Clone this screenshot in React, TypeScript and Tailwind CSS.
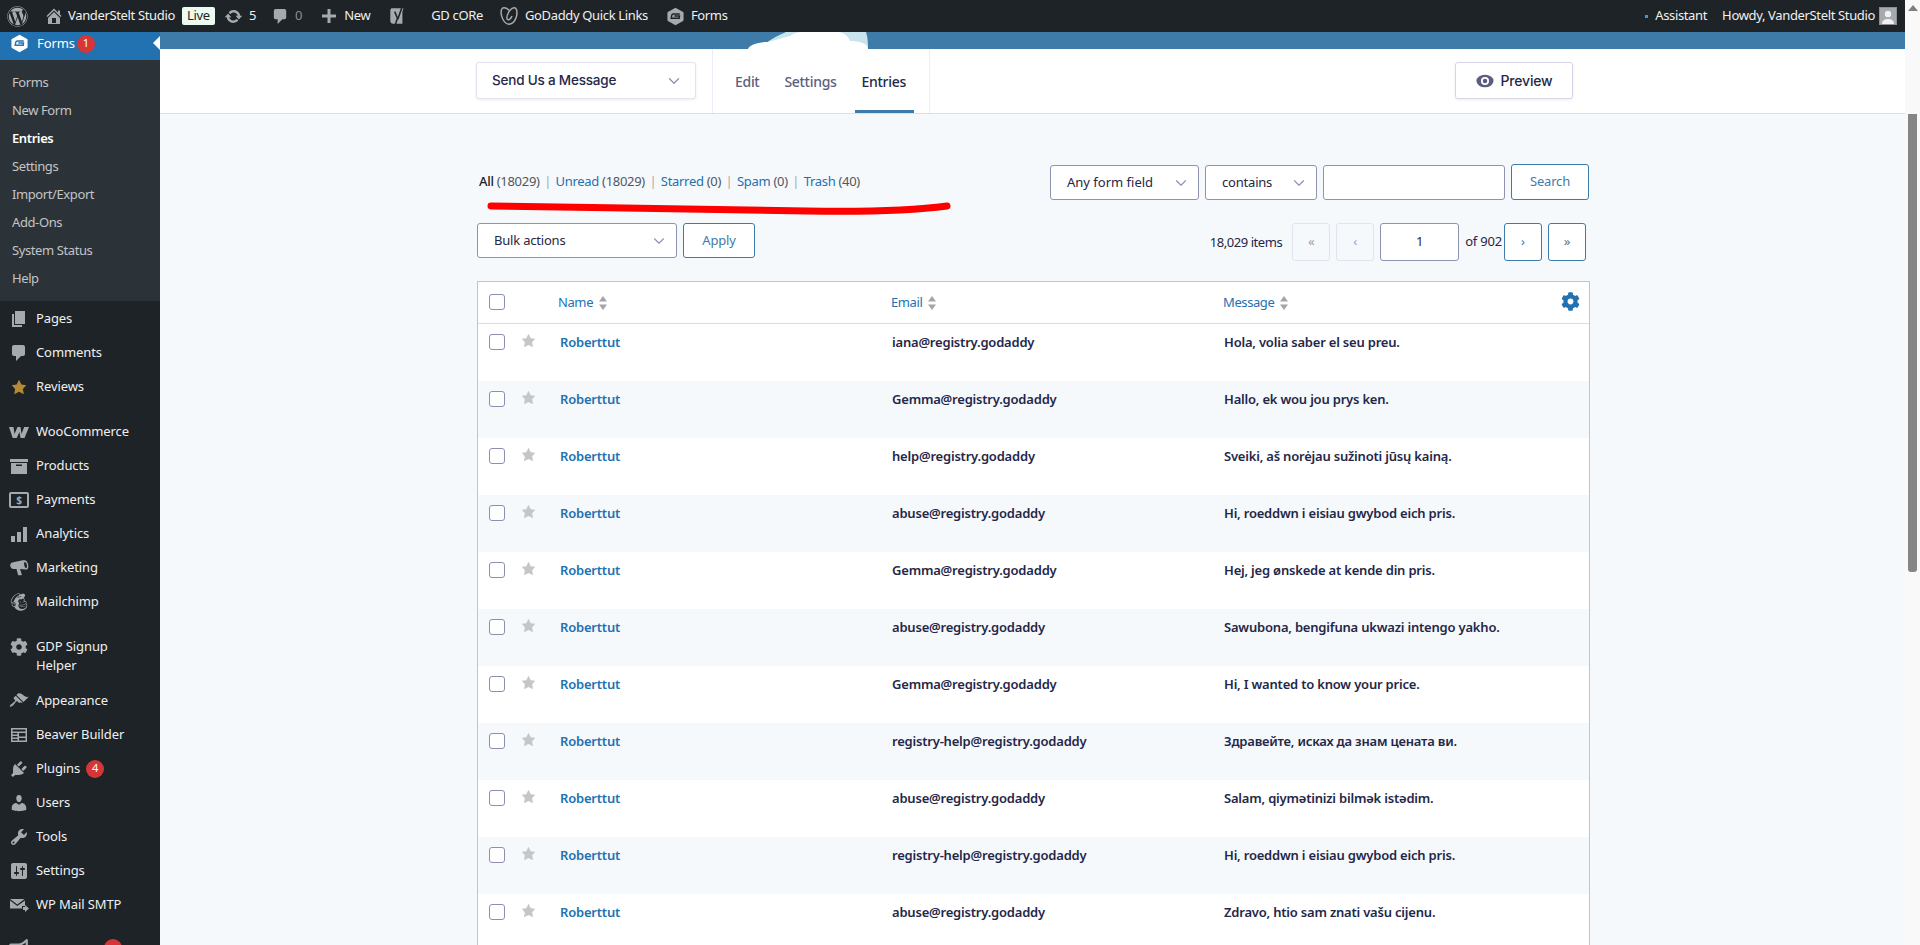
import type { ReactNode } from "react";
import { FaWordpress, FaCog, FaBullhorn, FaMailchimp } from "react-icons/fa";
import { ChevronDown } from "lucide-react";

const sans = "font-['Noto_Sans','Liberation_Sans',sans-serif]";

function Dash({ d, className = "" }: { d: string; className?: string }) {
  return (
    <svg viewBox="0 0 20 20" className={className} fill="currentColor" fillRule="evenodd">
      <path d={d} />
    </svg>
  );
}

const paths = {
  pages: "M6 15V2h10v13H6zm-1 1h8v2H3V5h2v11z",
  comment: "M5 2h9c1.1 0 2 .9 2 2v7c0 1.1-.9 2-2 2h-2l-5 5v-5H5c-1.1 0-2-.9-2-2V4c0-1.1.9-2 2-2z",
  star: "M10 1l3 6 6 .75-4.12 4.62L16 19l-6-3-6 3 1.13-6.63L1 7.75 7 7z",
  box: "M19 3v3H1V3h18zM2 7h16v11H2V7zm5 1.5V10h6V8.5H7z",
  bars: "M2 12h4v6H2zM8 8h4v10H8zM14 3h4v15h-4z",
  brush:
    "M14.48 11.06L7.41 3.99l1.5-1.5c.5-.56 2.3-.47 3.51.32 1.21.8 1.43 1.28 2.91 2.1 1.18.64 2.45 1.26 4.45.85zm-.71.71L6.7 4.7 4.93 6.47c-.39.39-.39 1.02 0 1.41l1.06 1.06c.39.39.39 1.03 0 1.42-.6.6-1.43 1.11-2.21 1.69-.35.26-.7.53-1.01.84C1.43 13.23.4 14.75 1.1 15.45c.71.71 2.22-.33 3.56-1.67.31-.31.58-.66.85-1.02.57-.78 1.08-1.61 1.69-2.21.39-.39 1.02-.39 1.41 0l1.06 1.06c.39.39 1.02.39 1.41 0z",
  plug:
    "M13.11 4.36L9.87 7.6 8 5.73l3.24-3.24c.35-.34 1.05-.2 1.56.32.52.51.66 1.21.31 1.55zm-8 1.77l.91-1.12 9.01 9.01-1.19.84c-.71.71-2.63 1.16-3.82 1.16H6.14L4.9 17.26c-.59.59-1.54.59-2.12 0-.59-.58-.59-1.53 0-2.12l1.24-1.24v-3.88c0-1.13.4-3.19 1.09-3.89zm7.26 3.97l3.24-3.24c.34-.35 1.04-.21 1.55.31.52.51.66 1.21.31 1.55l-3.24 3.25z",
  users:
    "M10 9.25c-2.27 0-2.73-3.44-2.73-3.44C7 4.02 7.82 2 9.97 2c2.16 0 2.98 2.02 2.71 3.81 0 0-.41 3.44-2.68 3.44zm0 2.57L12.72 10c2.39 0 4.52 2.33 4.52 4.53v2.49s-3.65 1.13-7.24 1.13c-3.65 0-7.24-1.13-7.24-1.13v-2.49c0-2.25 1.94-4.48 4.47-4.48z",
  tools:
    "M16.68 9.77c-1.34 1.34-3.3 1.67-4.95.99l-5.41 6.52c-.99.99-2.59.99-3.58 0s-.99-2.59 0-3.57l6.52-5.42c-.68-1.65-.35-3.61.99-4.95 1.28-1.28 3.12-1.62 4.72-1.06l-2.89 2.89 2.82 2.82 2.86-2.87c.53 1.58.18 3.39-1.08 4.67zM3.81 16.21c.4.39 1.04.39 1.43 0 .4-.4.4-1.04 0-1.43-.39-.4-1.03-.4-1.43 0-.39.39-.39 1.03 0 1.43z",
  sliders:
    "M18 16V4c0-1.1-.9-2-2-2H4c-1.1 0-2 .9-2 2v12c0 1.1.9 2 2 2h12c1.1 0 2-.9 2-2zM8 11h1c.55 0 1 .45 1 1s-.45 1-1 1H8v1.5c0 .28-.22.5-.5.5s-.5-.22-.5-.5V13H6c-.55 0-1-.45-1-1s.45-1 1-1h1V5.5c0-.28.22-.5.5-.5s.5.22.5.5V11zm5-2h-1c-.55 0-1-.45-1-1s.45-1 1-1h1V5.5c0-.28.22-.5.5-.5s.5.22.5.5V7h1c.55 0 1 .45 1 1s-.45 1-1 1h-1v5.5c0 .28-.22.5-.5.5s-.5-.22-.5-.5V9z",
  home: "M16 8.5l1.53 1.53-1.06 1.06L10 4.62l-6.47 6.47-1.06-1.06L10 2.5l4 4v-2h2v4zm-6-2.46l6 5.99V18H4v-5.97zM12 17v-5H8v5h4z",
  sync:
    "M10.2 3.28c3.53 0 6.43 2.61 6.92 6h2.08l-3.5 4-3.5-4h2.32c-.45-1.97-2.21-3.44-4.32-3.44-1.45 0-2.73.71-3.54 1.78L4.95 5.66C6.23 4.2 8.11 3.28 10.2 3.28zm-.4 13.44c-3.52 0-6.43-2.61-6.92-6H.8l3.5-4c1.17 1.33 2.33 2.67 3.5 4H5.48c.45 1.97 2.21 3.44 4.32 3.44 1.45 0 2.73-.71 3.54-1.78l1.71 1.95c-1.28 1.46-3.15 2.39-5.25 2.39z",
  plus: "M17 8.5v3h-5.5V17h-3v-5.5H3v-3h5.5V3h3v5.5z",
  woo: "M0 5h4.5l1 7 3-7h3l1 7 2.7-7H20l-4.5 11h-4l-1-6-2.8 6h-4z",
  mail: "M1 4h14.5L8.3 9.5 1 4zm0 1.6l7.3 5.4 7.7-5.6V11h-3v2.5H1V5.6zM14 12h2V10l4 3.5-4 3.5v-2h-2v-3z",
  beaver:
    "M2 3h16v14H2V3zm1.5 1.5v2h13v-2h-13zm0 3.5v1.5h5V8h-5zm6.5 0v3.5h6.5V8H10zm-6.5 3v1.5h5V11h-5zm0 3v1.5h5V14h-5zm6.5-1v2.5h6.5V13H10z",
  megaphone:
    "M15.500 2.200c1.500-.4 3 1.400 3.600 4 .6 2.600.1 5-1.400 5.400-.3.1-.6.1-.9 0L11 11l1.800 5.500c.1.400-.2.800-.6.800H9.800c-.4 0-.7-.3-.8-.6L7.500 11H4.500c-1.500 0-2.800-1.100-3.200-2.700-.4-1.700.4-3.200 1.800-3.700l10.600-2.400c.6-.1 1.200 0 1.800 0zM15.800 4c-.7.2-.9 1.700-.5 3.400.4 1.700 1.300 2.800 2 2.600.7-.2.900-1.700.5-3.400-.4-1.700-1.300-2.800-2-2.600z",
};

function GravityIcon({ className = "", inner }: { className?: string; inner: string }) {
  return (
    <svg viewBox="0 0 20 20" className={className}>
      <path
        d="M10 .8 18 5.3c.3.2.5.5.5.9v7.6c0 .4-.2.7-.5.9l-8 4.5-8-4.5c-.3-.2-.5-.5-.5-.9V6.200c0-.4.2-.7.5-.9z"
        fill="currentColor"
      />
      <path
        d="M14.500 7.400H7.800c-1 0-1.600.6-1.800 1.400l-.5 3.100h8.400l.3-2.400H8.800"
        fill="none"
        stroke={inner}
        strokeWidth="1.500"
      />
    </svg>
  );
}

function YoastIcon() {
  return (
    <svg viewBox="0 0 20 20" className="w-[22px] h-[22px] text-[#a7aaad]">
      <path d="M4 3h11l-1 3v11H5.500C4.100 17 3 15.900 3 14.500V4.500z" fill="currentColor" />
      <path d="M7 6l2.500 6L7.500 18M13.800 1.500 9.800 13" fill="none" stroke="#1d2327" strokeWidth="1.400" />
    </svg>
  );
}

function GoDaddyIcon() {
  return (
    <svg viewBox="0 0 20 20" className="w-[20px] h-[20px] text-[#a7aaad]" fill="none" stroke="currentColor" strokeWidth="1.500">
      <path d="M10 4.300C8.200 2.300 5 1 3.500 2.200 1.500 3.800 1.500 9 4 13.500c1.800 3.200 4 4.700 6 4.700s4.800-1.500 6.500-5C18.500 9 18.500 3.800 16.500 2.200 15 1 11.500 2.500 9.500 6.500 8 9.500 7.500 12.500 8.500 13.500c1.200 1 3.500-1 4.500-3.500" />
    </svg>
  );
}

function TopItem({ children, className = "" }: { children: ReactNode; className?: string }) {
  return <div className={`flex items-center ${className}`}>{children}</div>;
}

function TopBar() {
  return (
    <header className="h-[32px] shrink-0 bg-[#1d2327] flex items-center text-[13px] tracking-[-0.35px] text-[#f0f0f1] whitespace-nowrap">
      <TopItem className="ml-[7px]">
        <FaWordpress className="w-[21px] h-[21px] text-[#a7aaad]" />
      </TopItem>
      <TopItem className="ml-[16px]">
        <Dash d={paths.home} className="w-[20px] h-[20px] text-[#a7aaad]" />
        <span className="ml-[4px]">VanderStelt Studio</span>
      </TopItem>
      <span className="ml-[7px] w-[33px] h-[18px] flex items-center justify-center bg-[#edfaef] text-[#1d2327] rounded-[2px]">Live</span>
      <TopItem className="ml-[9px]">
        <Dash d={paths.sync} className="w-[19px] h-[19px] text-[#a7aaad]" />
        <span className="ml-[6px]">5</span>
      </TopItem>
      <TopItem className="ml-[15px]">
        <Dash d={paths.comment} className="w-[19px] h-[19px] text-[#a7aaad]" />
        <span className="ml-[5px] text-[#8c8f94]">0</span>
      </TopItem>
      <TopItem className="ml-[17px]">
        <Dash d={paths.plus} className="w-[20px] h-[20px] text-[#a7aaad]" />
        <span className="ml-[5px]">New</span>
      </TopItem>
      <TopItem className="ml-[17px]">
        <YoastIcon />
      </TopItem>
      <span className="ml-[22px]">GD cORe</span>
      <TopItem className="ml-[16px]">
        <GoDaddyIcon />
        <span className="ml-[6px]">GoDaddy Quick Links</span>
      </TopItem>
      <TopItem className="ml-[18px]">
        <GravityIcon className="w-[19px] h-[19px] text-[#a7aaad]" inner="#1d2327" />
        <span className="ml-[6px]">Forms</span>
      </TopItem>
      <div className="ml-auto flex items-center">
        <span className="w-[3px] h-[3px] bg-[#2ea2cc]" />
        <span className="ml-[7px]">Assistant</span>
        <span className="ml-[15px]">Howdy, VanderStelt Studio</span>
        <span className="ml-[4px] mr-[8px] w-[18px] h-[18px] bg-[#a7aaad] border border-[#8c8f94] flex items-end justify-center overflow-hidden">
          <svg viewBox="0 0 16 16" className="w-[16px] h-[16px] text-[#f0f0f1]" fill="currentColor">
            <circle cx="8" cy="6" r="3.200" />
            <path d="M2 16c0-4 3-5 6-5s6 1 6 5z" />
          </svg>
        </span>
      </div>
    </header>
  );
}

const subItems = ["Forms", "New Form", "Entries", "Settings", "Import/Export", "Add-Ons", "System Status", "Help"];

function MenuItem({ icon, label, badge }: { icon: ReactNode; label: string; badge?: string }) {
  return (
    <div className="h-[34px] pt-[1px] flex items-center text-[#f0f0f1]">
      <span className="w-[36px] flex justify-center pl-[2px] text-[#a7aaad]">{icon}</span>
      <span>{label}</span>
      {badge && (
        <span className="ml-[6px] w-[18px] h-[18px] rounded-full bg-[#d63638] text-white text-[11px] flex items-center justify-center">{badge}</span>
      )}
    </div>
  );
}

const ic = "w-[20px] h-[20px]";

function Sidebar() {
  return (
    <aside className="w-[160px] shrink-0 bg-[#1d2327] text-[13px] tracking-[-0.1px]">
      <div className="relative h-[28px] pb-[5px] bg-[#2271b1] flex items-center text-white">
        <span className="w-[37px] flex justify-center pl-[2px]">
          <GravityIcon className="w-[19px] h-[19px] text-white" inner="#2271b1" />
        </span>
        <span>Forms</span>
        <span className="ml-[2px] w-[18px] h-[18px] rounded-full bg-[#d63638] text-[11px] flex items-center justify-center">1</span>
        <span className="absolute right-0 top-[4px] border-y-[7px] border-r-[7px] border-y-transparent border-r-white" />
      </div>
      <div className="bg-[#2c3338] pt-[9px] pb-[8px] tracking-[-0.4px]">
        {subItems.map((s) => (
          <div key={s} className={`h-[28px] pl-[12px] flex items-center ${s === "Entries" ? "text-white font-semibold" : "text-[#c3c4c7]"}`}>
            {s}
          </div>
        ))}
      </div>
      <MenuItem icon={<Dash d={paths.pages} className={ic} />} label="Pages" />
      <MenuItem icon={<Dash d={paths.comment} className={ic} />} label="Comments" />
      <MenuItem icon={<Dash d={paths.star} className="w-[16px] h-[16px] text-[#b58a35]" />} label="Reviews" />
      <div className="h-[11px]" />
      <MenuItem icon={<Dash d={paths.woo} className={ic} />} label="WooCommerce" />
      <MenuItem icon={<Dash d={paths.box} className={ic} />} label="Products" />
      <MenuItem
        icon={
          <span className="w-[20px] h-[16px] border-2 border-[#a7aaad] rounded-[2px] text-[10px] font-bold flex items-center justify-center leading-none">$</span>
        }
        label="Payments"
      />
      <MenuItem icon={<Dash d={paths.bars} className={ic} />} label="Analytics" />
      <MenuItem icon={<Dash d={paths.megaphone} className={ic} />} label="Marketing" />
      <MenuItem icon={<FaMailchimp className={ic} />} label="Mailchimp" />
      <div className="h-[13px]" />
      <div className="h-[52px] pt-[6px] flex text-[#f0f0f1] leading-[19px]">
        <span className="w-[36px] flex justify-center pl-[2px] text-[#a7aaad]">
          <FaCog className="w-[18px] h-[18px] mt-[1px]" />
        </span>
        <span>
          GDP Signup
          <br />
          Helper
        </span>
      </div>
      <MenuItem icon={<Dash d={paths.brush} className={ic} />} label="Appearance" />
      <MenuItem icon={<Dash d={paths.beaver} className={ic} />} label="Beaver Builder" />
      <MenuItem icon={<Dash d={paths.plug} className={ic} />} label="Plugins" badge="4" />
      <MenuItem icon={<Dash d={paths.users} className={ic} />} label="Users" />
      <MenuItem icon={<Dash d={paths.tools} className={ic} />} label="Tools" />
      <MenuItem icon={<Dash d={paths.sliders} className={ic} />} label="Settings" />
      <MenuItem icon={<Dash d={paths.mail} className={ic} />} label="WP Mail SMTP" />
      <div className="h-[10px]" />
      <div className="h-[34px] flex items-center">
        <span className="w-[36px] flex justify-center pl-[2px] text-[#a7aaad]">
          <FaBullhorn className={ic} />
        </span>
        <span className="ml-[68px] w-[18px] h-[18px] rounded-full bg-[#d63638]" />
      </div>
    </aside>
  );
}

function Cloud() {
  return (
    <svg viewBox="0 0 120 17" className="absolute left-[587px] bottom-0 w-[122px] h-[17px]">
      <path d="M14 17C18 8 30 4 38 0h80c2 6 2 12 2 17z" fill="#c9e4ec" />
      <path d="M0 17C2 12 12 10 20 10c8-2 14-4 22-6 4-3 8-4 12-4h36c4 0 10 3 12 9 8 0 18 2 18 8z" fill="#ffffff" />
    </svg>
  );
}

function FormHeader() {
  return (
    <>
      <div className="relative h-[17px] bg-[#3e7ba8] shrink-0">
        <Cloud />
      </div>
      <div className="h-[65px] shrink-0 bg-white border-b border-[#dcdfe8] flex font-['Inter',sans-serif]">
        <div className="ml-[316px] mt-[13px] w-[220px] h-[37px] bg-white border border-[#e2e3ef] rounded-[3px] shadow-[0_1px_3px_rgba(18,25,97,0.08)] flex items-center justify-between pl-[15px] pr-[12px] text-[13.5px] font-medium text-[#242748]">
          Send Us a Message
          <ChevronDown className="w-[18px] h-[18px] text-[#9092b2]" strokeWidth={1.75} />
        </div>
        <nav className={`ml-[16px] w-[218px] border-x border-[#ecedf8] flex ${sans} text-[14px] font-medium tracking-[-0.3px]`}>
          <span className="ml-[22px] mt-[22px] text-[#5b5e80]">Edit</span>
          <span className="ml-[25px] mt-[22px] text-[#5b5e80]">Settings</span>
          <span className="relative ml-[25px] mt-[22px] text-[#242748]">
            Entries
            <span className="absolute -left-[7px] -right-[8px] top-[39px] h-[3px] bg-[#3e7ba8]" />
          </span>
        </nav>
        <div className="ml-[525px] mt-[13px] w-[118px] h-[37px] bg-white border border-[#d5d7e9] rounded-[3px] shadow-[0_1px_3px_rgba(18,25,97,0.08)] flex items-center justify-center text-[14px] font-medium text-[#242748]">
          <svg viewBox="0 0 20 20" className="w-[18px] h-[18px] mr-[7px]">
            <ellipse cx="10" cy="10" rx="9.500" ry="7" fill="#5b5e80" />
            <circle cx="10" cy="10" r="4.500" fill="#ffffff" />
            <circle cx="10" cy="10" r="2.500" fill="#5b5e80" />
          </svg>
          Preview
        </div>
      </div>
    </>
  );
}

function SelectBox({ label, className }: { label: string; className: string }) {
  return (
    <div className={`h-[35px] bg-white border border-[#9092b2] rounded-[3px] flex items-center justify-between pl-[16px] pr-[8px] text-[13px] text-[#242748] ${className}`}>
      {label}
      <ChevronDown className="w-[18px] h-[18px] text-[#9092b2]" strokeWidth={1.5} />
    </div>
  );
}

function PageBtn({ label, off }: { label: string; off?: boolean }) {
  return (
    <span
      className={`w-[38px] h-[38px] rounded-[3px] border flex items-center justify-center text-[13px] ${
        off ? "border-[#e2e3ef] text-[#9a9cb5]" : "bg-white border-[#3e7ba8] text-[#3e7ba8]"
      }`}
    >
      {label}
    </span>
  );
}

function SortArrows() {
  return (
    <svg viewBox="0 0 8 14" className="ml-[6px] w-[8px] h-[14px] text-[#a2a5ad]" fill="currentColor">
      <path d="M4 0l4 5.500H0zM4 14 0 8.500h8z" />
    </svg>
  );
}

function Checkbox() {
  return <span className="block w-[16px] h-[16px] bg-white border border-[#8c8fb0] rounded-[3px]" />;
}

const entries = [
  ["iana@registry.godaddy", "Hola, volia saber el seu preu."],
  ["Gemma@registry.godaddy", "Hallo, ek wou jou prys ken."],
  ["help@registry.godaddy", "Sveiki, aš norėjau sužinoti jūsų kainą."],
  ["abuse@registry.godaddy", "Hi, roeddwn i eisiau gwybod eich pris."],
  ["Gemma@registry.godaddy", "Hej, jeg ønskede at kende din pris."],
  ["abuse@registry.godaddy", "Sawubona, bengifuna ukwazi intengo yakho."],
  ["Gemma@registry.godaddy", "Hi, I wanted to know your price."],
  ["registry-help@registry.godaddy", "Здравейте, исках да знам цената ви."],
  ["abuse@registry.godaddy", "Salam, qiymətinizi bilmək istədim."],
  ["registry-help@registry.godaddy", "Hi, roeddwn i eisiau gwybod eich pris."],
  ["abuse@registry.godaddy", "Zdravo, htio sam znati vašu cijenu."],
];

function EntriesTable() {
  return (
    <div className="mt-[20px] border border-b-0 border-[#c3c4c7] bg-white">
      <div className="h-[42px] border-b border-[#dcdcde] flex items-center pl-[11px] text-[#2271b1] tracking-[-0.4px]">
        <span className="-mt-[2px]">
          <Checkbox />
        </span>
        <div className="ml-[53px] w-[333px] flex items-center">
          Name
          <SortArrows />
        </div>
        <div className="w-[332px] flex items-center">
          Email
          <SortArrows />
        </div>
        <div className="flex-1 flex items-center">
          Message
          <SortArrows />
        </div>
        <FaCog className="w-[19px] h-[19px] mr-[9px] -mt-[3px]" />
      </div>
      {entries.map(([email, message], i) => (
        <div key={i} className={`h-[57px] flex pl-[11px] pt-[9px] font-semibold text-[#242748] ${i % 2 ? "bg-[#f6f9fc]" : "bg-white"}`}>
          <span className="mt-[1px]">
            <Checkbox />
          </span>
          <Dash d={paths.star} className="ml-[16px] w-[15px] h-[15px] text-[#c6c6c6]" />
          <span className="ml-[24px] w-[332px] text-[#2271b1]">Roberttut</span>
          <span className="w-[332px]">{email}</span>
          <span>{message}</span>
        </div>
      ))}
    </div>
  );
}

function Filters() {
  const sep = <span className="mx-[4.5px] text-[#a7aaad]">|</span>;
  return (
    <div className="flex justify-between items-start pt-[50px]">
      <div className="ml-[2px] mt-[7px] leading-[20px] text-[#2271b1] tracking-[-0.3px]">
        <span className="text-[#1d2327] font-medium">All</span> <span className="text-[#50575e]">(18029)</span>
        {sep}Unread <span className="text-[#50575e]">(18029)</span>
        {sep}Starred <span className="text-[#50575e]">(0)</span>
        {sep}Spam <span className="text-[#50575e]">(0)</span>
        {sep}Trash <span className="text-[#50575e]">(40)</span>
      </div>
      <div className="flex items-start">
        <SelectBox label="Any form field" className="mt-[1px] w-[149px] pt-[1px] tracking-[0px]" />
        <SelectBox label="contains" className="mt-[1px] ml-[6px] w-[112px] pt-[1px]" />
        <div className="mt-[1px] ml-[6px] w-[182px] h-[35px] bg-white border border-[#9092b2] rounded-[3px]" />
        <div className="ml-[6px] w-[78px] h-[36px] mr-[1px] bg-white border border-[#3e7ba8] rounded-[3px] flex items-center justify-center text-[#3e7ba8]">Search</div>
      </div>
    </div>
  );
}

function Toolbar() {
  return (
    <div className="mt-[23px] flex justify-between items-start">
      <div className="flex">
        <SelectBox label="Bulk actions" className="w-[200px]" />
        <div className="ml-[6px] w-[72px] h-[35px] bg-white border border-[#3e7ba8] rounded-[3px] flex items-center justify-center text-[#3e7ba8]">Apply</div>
      </div>
      <div className="flex items-center mr-[4px] text-[#242748]">
        <span className="mr-[10px] pt-[1px] tracking-[-0.45px]">18,029 items</span>
        <PageBtn label="«" off />
        <span className="ml-[6px]">
          <PageBtn label="‹" off />
        </span>
        <span className="ml-[6px] w-[79px] h-[38px] bg-white border border-[#9092b2] rounded-[3px] flex items-center justify-center">1</span>
        <span className="ml-[6px] mr-[2px]">of 902</span>
        <PageBtn label="›" />
        <span className="ml-[6px]">
          <PageBtn label="»" />
        </span>
      </div>
    </div>
  );
}

function RedMark() {
  return (
    <svg viewBox="0 0 470 14" className="absolute left-[327px] top-[169px] w-[470px] h-[14px]" fill="none">
      <path d="M4 5C110 6 210 9 320 10 380 11 430 9 460 5" stroke="#ff0000" strokeWidth="7" strokeLinecap="round" />
    </svg>
  );
}

export default function App() {
  return (
    <div className={`h-screen flex overflow-hidden bg-[#f6f9fc] ${sans} text-[13px]`}>
      <div className="flex-1 min-w-0 flex flex-col">
        <TopBar />
        <div className="flex-1 min-h-0 flex">
          <Sidebar />
          <main className="relative flex-1 min-w-0 flex flex-col tracking-[-0.2px]">
            <FormHeader />
            <div className="ml-[317px] w-[1113px]">
              <Filters />
              <Toolbar />
              <EntriesTable />
            </div>
            <RedMark />
          </main>
        </div>
      </div>
      <div className="w-[15px] shrink-0 bg-[#f9f9f9] flex flex-col items-center">
        <span className="mt-[5px] border-x-[5px] border-b-[6px] border-x-transparent border-b-[#7f7f7f]" />
        <span className="mt-[103px] w-[9px] h-[458px] bg-[#858585] rounded-b-[3px]" />
      </div>
    </div>
  );
}
